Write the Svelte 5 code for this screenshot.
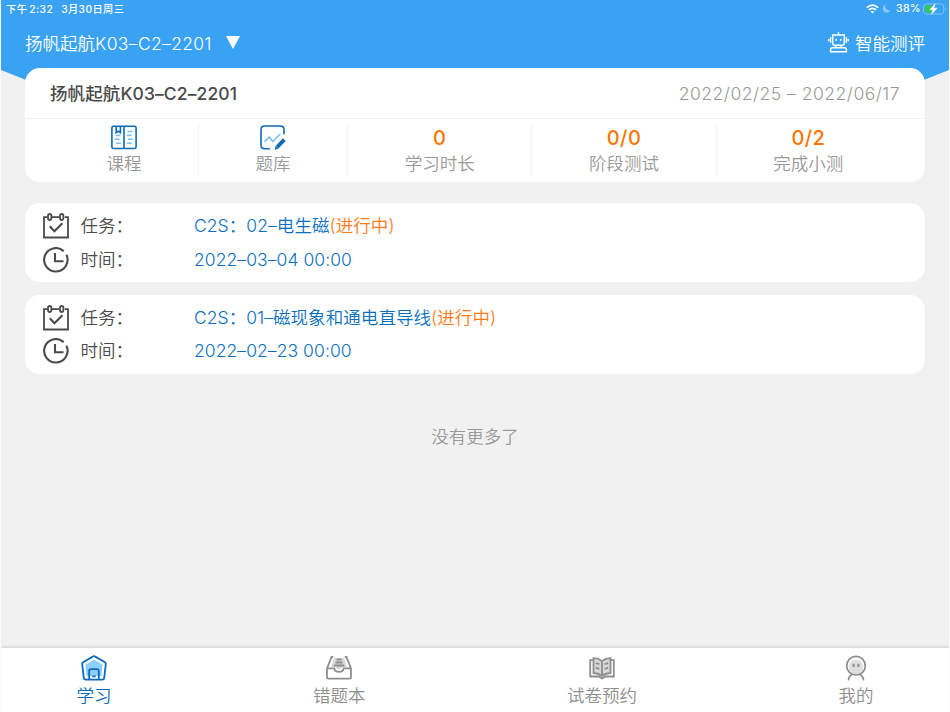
<script>
  const className = '扬帆起航';
  const classCode = 'K03–C2–2201';

  const stats = [
    { value: '0', label: '学习时长' },
    { value: '0/0', label: '阶段测试' },
    { value: '0/2', label: '完成小测' },
  ];

  const tasks = [
    { code: 'C2S：02–', title: '电生磁', status: '(进行中)', time: '2022–03–04 00:00' },
    { code: 'C2S：01–', title: '磁现象和通电直导线', status: '(进行中)', time: '2022–02–23 00:00' },
  ];
</script>

<div class="app">
  <header>
    <div class="status-bar">
      <span class="clock">下午<b>2:32</b></span>
      <span class="date">3月30日周三</span>
      <span class="spacer"></span>
      <svg width="13" height="10" viewBox="0 0 13 10" fill="none" stroke="#fff" stroke-width="1.7">
        <path d="M.8 3.6Q6.5-1.2 12.2 3.6M2.9 5.9Q6.5 2.8 10.1 5.9" />
        <path d="M4.6 7.5Q6.5 6 8.4 7.5L6.5 9.5Z" fill="#fff" stroke="none" />
      </svg>
      <svg class="moon" width="8" height="9" viewBox="0 0 8 9">
        <path d="M2.6.4A4.2 4.2 0 1 0 7.8 6.2A4.2 4.2 0 0 1 2.6.4Z" fill="#8dc8f8" />
      </svg>
      <span class="percent">38%</span>
      <svg width="24" height="12" viewBox="0 0 24 12">
        <rect x=".6" y=".9" width="20.2" height="10.2" rx="3" fill="none" stroke="#83c3f6" />
        <path d="M4 2.2H9V9.8H4Q2 9.8 2 7.8V4.2Q2 2.2 4 2.2Z" fill="#34c759" />
        <path d="M12.2.8L6.8 6.7H10L8.6 11.2L14.2 5.2H10.8Z" fill="#fff" stroke="#fff" stroke-width=".5" />
        <path d="M22.2 4.2Q24 6 22.2 7.8Z" fill="#83c3f6" />
      </svg>
    </div>
    <div class="nav">
      <span>{className}<span class="code">{classCode}</span></span>
      <svg class="arrow" width="14" height="13" viewBox="0 0 14 13"><path d="M0 0H14L7 13Z" fill="#fff" /></svg>
      <span class="spacer"></span>
      <svg class="robot" width="21" height="21" viewBox="0 0 21 21" fill="none" stroke="#fff" stroke-width="1.5">
        <path d="M10.5.3V3M4.7 3H16.3V11.5Q16.3 13.2 14.6 13.2H6.4Q4.7 13.2 4.7 11.5ZM2.6 5.3V10.7M18.4 5.3V10.7M.7 7V9.2M20.3 7V9.2M7.8 13.4V15.6M13.2 13.4V15.6M4.5 15.8H16.5Q18.4 15.8 18.4 17.8V19.8H2.6V17.8Q2.6 15.8 4.5 15.8Z" />
        <path d="M8.2 6.7V8.7M12.8 6.7V8.7" />
      </svg>
      <span>智能测评</span>
    </div>
  </header>

  <main>
    <section class="card course">
      <div class="course-head">
        <h1>{className}<span>{classCode}</span></h1>
        <span class="range">2022/02/25 – 2022/06/17</span>
      </div>
      <div class="stats">
        <div class="entry">
          <svg width="26" height="25" viewBox="0 0 26 25" fill="none" stroke="#0b6bb8" stroke-width="1.6">
            <rect x=".9" y="1.3" width="24.2" height="22.2" rx="1.6" />
            <path d="M13 1.3V23.5M5.2 1.5V7.7L7.3 6.2L9.4 7.7V1.5" />
            <path d="M4.6 10.5H9.5M3.7 14.3H8.5M5.2 18.2H10M16.5 6.5H21.5M15.8 10.4H20.5M17 14.3H22M15.8 18.2H20.8" stroke="#79bff4" />
          </svg>
          <span>课程</span>
        </div>
        <div class="entry">
          <svg width="26" height="25" viewBox="0 0 26 25" fill="none" stroke="#0b6bb8" stroke-width="1.6" stroke-linecap="round">
            <path d="M24 8.8V4.7Q24 1 20.3 1H4.7Q1 1 1 4.7V20Q1 23.7 4.7 23.7H9.3" />
            <path d="M4.8 16.5L9.5 12L12.7 16.5L20 9.3" stroke="#79bff4" stroke-width="1.5" />
            <path d="M17 22.2L24.3 14.6" stroke-width="3.8" stroke-linecap="butt" />
            <path d="M15.5 21L14.8 24.7L18.5 23.7Z" fill="#0b6bb8" stroke="none" />
          </svg>
          <span>题库</span>
        </div>
        {#each stats as stat}
          <div class="stat">
            <strong>{stat.value}</strong>
            <span>{stat.label}</span>
          </div>
        {/each}
      </div>
    </section>

    {#each tasks as task}
      <section class="card task">
        <div class="row">
          <svg width="26" height="26" viewBox="0 0 26 26" fill="none" stroke="#4a4a4a" stroke-width="1.8">
            <path d="M4.2 4.2H1V24.5H25V4.2H21.8M8.8 4.2H16.2" />
            <rect x="5" y="1" width="3.4" height="6" rx="1.7" />
            <rect x="17" y="1" width="3.4" height="6" rx="1.7" />
            <path d="M6.8 13.3L11.4 18.2L19.4 10.3" stroke-width="2.1" />
          </svg>
          <span class="label">任务：</span>
          <span class="value">{task.code}{task.title}<em>{task.status}</em></span>
        </div>
        <div class="row">
          <svg width="26" height="26" viewBox="0 0 26 26" fill="none" stroke="#4a4a4a" stroke-width="2.1">
            <path d="M20.7 4.1A11.7 11.7 0 1 0 23.4 7.7" />
            <path d="M12 6V14.2H20.5" />
          </svg>
          <span class="label">时间：</span>
          <span class="value">{task.time}</span>
        </div>
      </section>
    {/each}

    <p class="end">没有更多了</p>
  </main>

  <nav class="tabs">
    <a class="active" href="#study">
      <svg width="26" height="26" viewBox="0 0 26 26" fill="none" stroke="#0b6bb8" stroke-width="1.8" stroke-linejoin="round">
        <path d="M4.5 9.8L13 4.5L21.5 9.8L20.5 21H5.5Z" fill="#8fceff" stroke="none" />
        <path d="M13 1.2Q13.6 1.2 14.2 1.6L24 7.3Q25 8 24.8 9.1L23.2 22.8Q23 24.6 21.3 24.6H4.7Q3 24.6 2.8 22.8L1.2 9.1Q1 8 2 7.3L11.8 1.6Q12.4 1.2 13 1.2Z" />
        <path d="M8.2 24.5V16Q8.2 14.2 10 14.2H16Q17.8 14.2 17.8 16V24.5M11.3 21.3H14.7" />
      </svg>
      <span>学习</span>
    </a>
    <a href="#mistakes">
      <svg width="26" height="26" viewBox="0 0 26 26" fill="none" stroke="#8e8e8e" stroke-width="1.8">
        <path d="M8 3H18L21 12H17L13 15L9 12H5Z" fill="#d8d8d8" stroke="none" />
        <path d="M7.2 2H5.5L1 13.3V22.3Q1 23.7 2.4 23.7H23.6Q25 23.7 25 22.3V13.3L20.5 2H18.8M1 13.3H8.3C9 18 17 18 17.7 13.3H25" />
        <path d="M10.5 4.5H15.5M9.5 7.5H16.5M7.8 10.5H18.2" />
      </svg>
      <span>错题本</span>
    </a>
    <a href="#booking">
      <svg width="26" height="26" viewBox="0 0 26 26" fill="none" stroke="#8e8e8e" stroke-width="1.8">
        <path d="M4 3.5L13 6L22 3.5V18.5L13 21.5L4 18.5Z" fill="#d8d8d8" stroke="none" />
        <path d="M4.3 5.2H1.2V21.5H9.5L13 23.4L16.5 21.5H24.8V5.2H21.7M13 6.1V20.8M13 6.1Q9.2 3.2 4.5 3.2V18Q9.2 18 13 20.8Q16.8 18 21.5 18V3.2Q16.8 3.2 13 6.1" />
        <path d="M6.8 8.2L10.4 9.2M6.8 12.8L10.4 13.8M15.6 9.2L19.2 8.2M15.6 13.8L19.2 12.8" />
      </svg>
      <span>试卷预约</span>
    </a>
    <a href="#me">
      <svg width="26" height="26" viewBox="0 0 26 26" fill="none" stroke="#8e8e8e" stroke-width="1.7">
        <circle cx="13" cy="12" r="7.2" fill="#dedede" stroke="none" />
        <circle cx="13" cy="10.7" r="9.3" />
        <path d="M10.6 8.7V12M15.4 8.7V12" stroke-width="2" />
        <path d="M9.2 19.5C7 20.4 5.7 22.3 5.5 25.4M16.8 19.5C19 20.4 20.3 22.3 20.5 25.4" />
      </svg>
      <span>我的</span>
    </a>
  </nav>
</div>

<style>
  :global(body) {
    margin: 0;
  }

  .app {
    box-sizing: border-box;
    width: 950px;
    height: 712px;
    overflow: hidden;
    display: flex;
    flex-direction: column;
    background: #f1f1f1;
    border: solid #fafafa;
    border-width: 0 1px;
    font-family: Inter, 'Noto Sans CJK SC', sans-serif;
    font-size: 17.5px;
    font-weight: 350;
    color: #4a4a4a;
    white-space: nowrap;
  }

  svg {
    flex: none;
    display: block;
  }

  .spacer {
    flex: 1;
  }

  header {
    flex: none;
    height: 104px;
    background: #39a2f2;
    color: #fff;
    clip-path: polygon(0 0, 100% 0, 100% 70px, 91% 104px, 9% 104px, 0 70px);
  }

  .status-bar {
    display: flex;
    align-items: center;
    height: 17px;
    padding: 0 2px 0 5px;
    font-size: 10.2px;
    font-weight: 450;
    letter-spacing: 0.45px;
  }

  .clock b {
    margin-left: 2px;
    font-weight: 500;
  }

  .date {
    margin-left: 8px;
  }

  .moon {
    margin: 0 5px 0 4px;
  }

  .percent {
    margin-right: 2px;
    font-size: 10.5px;
  }

  .nav {
    display: flex;
    align-items: center;
    height: 50px;
    padding: 0 24px;
  }

  .code {
    letter-spacing: 0.35px;
  }

  .arrow {
    margin-left: 14px;
  }

  .robot {
    margin-right: 6px;
  }

  main {
    flex: 1;
    margin-top: -36px;
    padding: 0 24px;
    position: relative;
  }

  .card {
    box-sizing: border-box;
    background: #fff;
    border-radius: 15px;
  }

  .course {
    height: 114px;
    margin-bottom: 21.4px;
  }

  .course-head {
    box-sizing: border-box;
    display: flex;
    justify-content: space-between;
    align-items: center;
    height: 51px;
    padding: 0 25px 1px;
    border-bottom: 1px solid #f2f2f2;
  }

  h1 {
    margin: 0;
    font-size: inherit;
    font-weight: 500;
    letter-spacing: 0.1px;
  }

  .range {
    padding-top: 1px;
    color: #999;
    letter-spacing: 0.5px;
  }

  .stats {
    display: flex;
    padding: 4px 25px 0;
    color: #999;
  }

  .entry,
  .stat {
    box-sizing: border-box;
    display: flex;
    flex-direction: column;
    align-items: center;
    width: 149px;
    height: 54px;
    padding-top: 2px;
    border-right: 1px solid #f4f4f4;
    line-height: 27px;
  }

  .stat {
    flex: 1;
  }

  .stat:last-child {
    border: 0;
  }

  .stat strong {
    height: 25px;
    color: #ff7500;
    font-size: 20px;
    font-weight: 500;
    letter-spacing: 0.4px;
  }

  .task {
    height: 79px;
    margin-bottom: 12.4px;
    padding: 6px 18px;
  }

  .row {
    display: flex;
    align-items: center;
    height: 33.5px;
  }

  .row span {
    line-height: 24px;
  }

  .label {
    width: 113.5px;
    margin-left: 11.5px;
  }

  .value {
    color: #0b6fbd;
    letter-spacing: 0.07px;
  }

  em {
    color: #ff7a14;
    font-style: normal;
  }

  .end {
    margin: 50px 0 0;
    color: #999;
    text-align: center;
    line-height: 26px;
  }

  .tabs {
    flex: none;
    display: flex;
    justify-content: space-between;
    height: 64px;
    padding: 0 75.5px;
    background: #fff;
    box-shadow: 0 -1px 3px rgba(0, 0, 0, 0.15);
  }

  .tabs a {
    display: flex;
    flex-direction: column;
    align-items: center;
    padding-top: 7px;
    color: #8e8e8e;
    line-height: 29px;
    text-decoration: none;
  }

  .tabs .active {
    color: #0b6bb8;
  }
</style>
